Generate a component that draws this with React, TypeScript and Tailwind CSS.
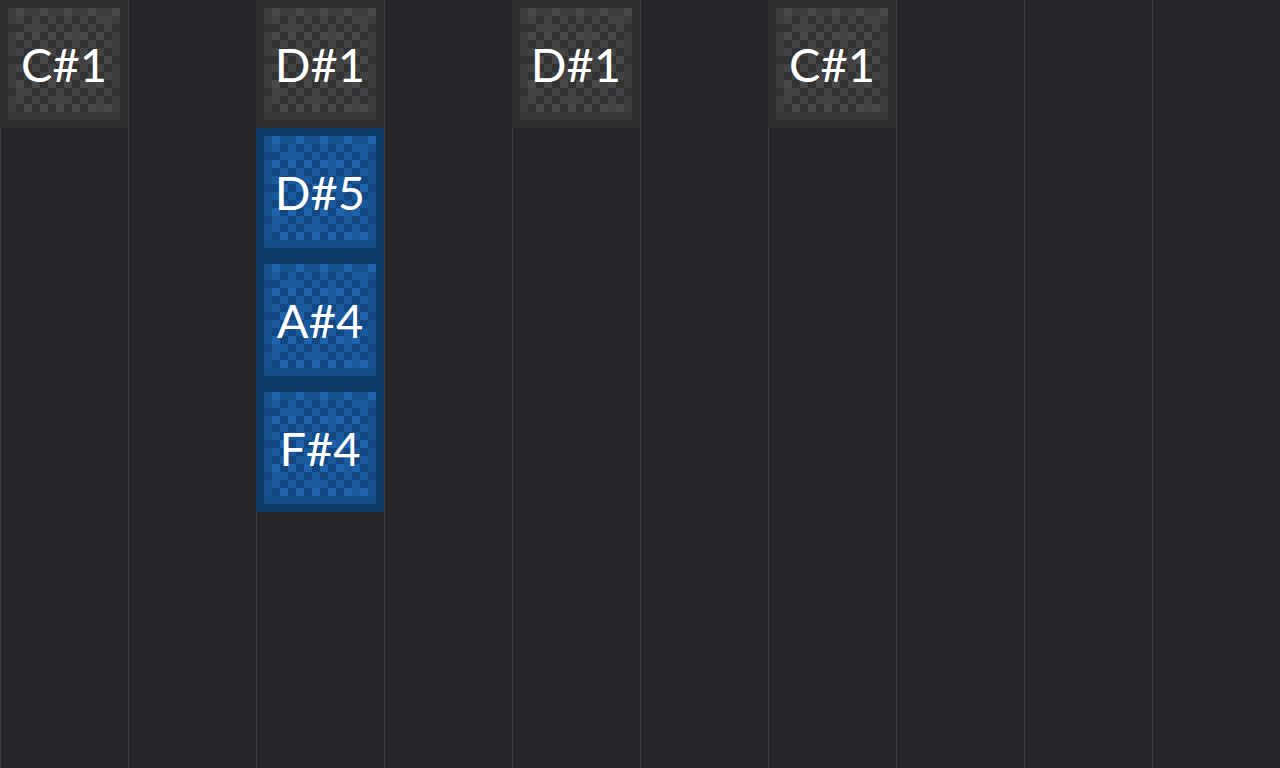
import React from "react";

type Theme = "gray" | "blue";

const palette: Record<Theme, Record<string, string>> = {
  gray: {
    M: "bg-[#424242]",
    D: "bg-[#323232]",
    L: "bg-[#494949]",
    B: "bg-[#383838]",
    F: "bg-[#3d3d3d]",
  },
  blue: {
    M: "bg-[#1a5a9c]",
    D: "bg-[#124781]",
    L: "bg-[#1e63ab]",
    B: "bg-[#154d89]",
    F: "bg-[#17528f]",
  },
};

function cellType(r: number, c: number): string {
  if (r === 13) return "B";
  if (r === 0) return c % 3 === 1 ? "L" : "F";
  if (c === 0 || c === 13) return r % 4 === 2 ? "D" : "F";
  if ((r + c) % 2 === 1) return (r * 3 + c * 5) % 7 === 0 ? "M" : "D";
  return (r * 5 + c * 3) % 6 === 0 ? "L" : "M";
}

const cells: string[] = [];
for (let r = 0; r < 14; r++) for (let c = 0; c < 14; c++) cells.push(cellType(r, c));

function Note({ label, theme }: { label: string; theme: Theme }) {
  const p = palette[theme];
  return (
    <div className="w-[128px] h-[128px] p-2">
      <div className="relative w-[112px] h-[112px]">
        <div className="grid grid-cols-[repeat(14,8px)] grid-rows-[repeat(14,8px)]">
          {cells.map((t, i) => (
            <div key={i} className={`w-2 h-2 ${p[t]}`} />
          ))}
        </div>
        <div
          className="absolute inset-0 flex items-center justify-center text-white text-[47px] leading-none"
          style={{ fontFamily: "Lato, 'Open Sans', sans-serif" }}
        >
          {label}
        </div>
      </div>
    </div>
  );
}

const columns: { top?: string; blue?: string[] }[] = [
  { top: "C#1" },
  {},
  { top: "D#1", blue: ["D#5", "A#4", "F#4"] },
  {},
  { top: "D#1" },
  {},
  { top: "C#1" },
  {},
  {},
  {},
];

export default function App() {
  return (
    <div className="w-[1280px] h-[768px] bg-[#262628] flex overflow-hidden">
      {columns.map((col, i) => (
        <div key={i} className="w-[128px] h-[768px] shrink-0 border-l border-[#3c3c3e] flex flex-col">
          {col.top && (
            <div className="-ml-px w-[128px] bg-[#2e2e2f]">
              <Note label={col.top} theme="gray" />
            </div>
          )}
          {col.blue && (
            <div className="-ml-px w-[128px] bg-[#0e3a68] flex flex-col">
              {col.blue.map((b) => (
                <Note key={b} label={b} theme="blue" />
              ))}
            </div>
          )}
        </div>
      ))}
    </div>
  );
}
